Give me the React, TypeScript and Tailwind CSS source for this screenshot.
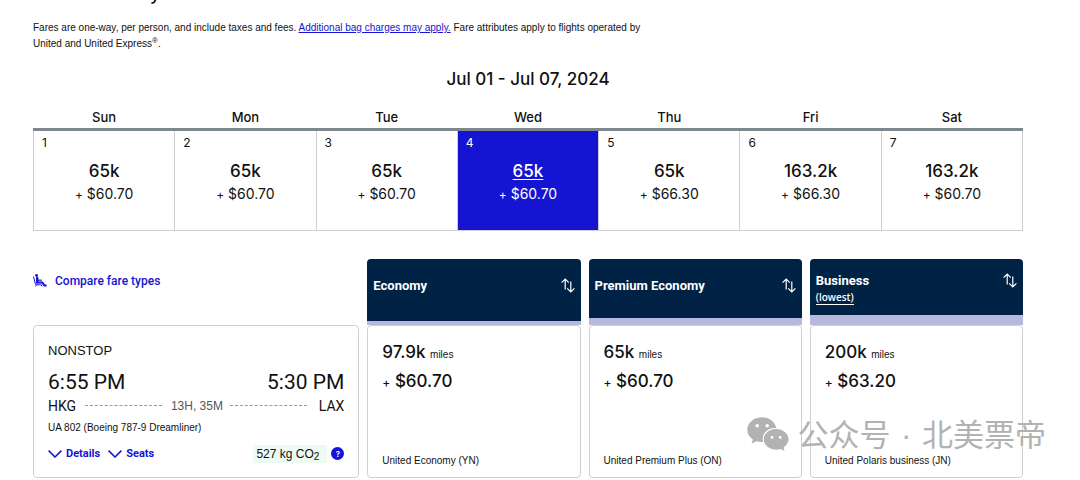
import clsx from "clsx";

type Day = { name: string; date: number; miles: string; tax: string; selected?: boolean };

type Fare = {
  title: string;
  lowest?: boolean;
  stripe: string;
  miles: string;
  tax: string;
  cabin: string;
};

const days: Day[] = [
  { name: "Sun", date: 1, miles: "65k", tax: "$60.70" },
  { name: "Mon", date: 2, miles: "65k", tax: "$60.70" },
  { name: "Tue", date: 3, miles: "65k", tax: "$60.70" },
  { name: "Wed", date: 4, miles: "65k", tax: "$60.70", selected: true },
  { name: "Thu", date: 5, miles: "65k", tax: "$66.30" },
  { name: "Fri", date: 6, miles: "163.2k", tax: "$66.30" },
  { name: "Sat", date: 7, miles: "163.2k", tax: "$60.70" },
];

const fares: Fare[] = [
  { title: "Economy", stripe: "border-b-4", miles: "97.9k", tax: "$60.70", cabin: "United Economy (YN)" },
  { title: "Premium Economy", stripe: "border-b-[7px]", miles: "65k", tax: "$60.70", cabin: "United Premium Plus (ON)" },
  { title: "Business", lowest: true, stripe: "border-b-[10px]", miles: "200k", tax: "$63.20", cabin: "United Polaris business (JN)" },
];

function SeatIcon() {
  return (
    <svg viewBox="0 0 14 13" className="h-[13px] w-[14px]" fill="none" stroke="currentColor" aria-hidden="true">
      <circle cx="3.6" cy="1.5" r="1.4" fill="currentColor" stroke="none" />
      <path d="M4.2 4v4.6" strokeWidth="2.4" strokeLinecap="round" />
      <path d="M4.4 8.6h5l1.900 2.800h2.300" strokeWidth="2" strokeLinejoin="round" />
      <path d="M4.600 6.200H8.800" strokeWidth="1.200" />
      <path d="M.5 2.600 2.400 10q.2.800 1 .8h4.800l.8 1.600M3.600 10.600l-1 1.800" strokeWidth="1" />
    </svg>
  );
}

function SortIcon() {
  return (
    <svg viewBox="0 0 14 15" className="h-[15px] w-[14px]" fill="none" stroke="currentColor" strokeWidth="1.2" aria-hidden="true">
      <path d="M4.2 11.5V1.2M.6 4.6 4.2 1l3.6 3.6" />
      <path d="M9.8 3.5v10.3M6.2 10.4l3.6 3.6 3.6-3.6" />
    </svg>
  );
}

function ChevronIcon() {
  return (
    <svg viewBox="0 0 14 8" className="h-2 w-[14px]" fill="none" stroke="currentColor" strokeWidth="1.5" aria-hidden="true">
      <path d="m.6.6 6.4 6.4L13.4.6" />
    </svg>
  );
}

function WeChatIcon() {
  return (
    <svg viewBox="0 0 42 34" className="h-[34px] w-[42px]" fill="currentColor" aria-hidden="true">
      <path
        fillRule="evenodd"
        d="M15.2.3C6.9.3.3 5.800.3 12.800c0 4 2.100 7.300 5.600 9.700l-1.400 4.300 5-2.500c1.800.4 3.400.7 5.400.7h1.300a10 10 0 0 1-.5-3c0-6.100 5.500-11 12.500-11h1.200C27.900 4.800 22 .3 15.200.3ZM10.200 7a1.800 1.800 0 1 1 0 3.600 1.800 1.800 0 0 1 0-3.600Zm10 0a1.800 1.800 0 1 1 0 3.600 1.800 1.800 0 0 1 0-3.600Z"
      />
      <path
        fillRule="evenodd"
        d="M41.5 22.3c0-5.7-5.7-10.3-12.3-10.3-7 0-12.4 4.6-12.4 10.3s5.400 10.400 12.400 10.400c1.500 0 3-.3 4.400-.7l4 2.100-1.100-3.500c2.900-2.100 5-5 5-8.300Zm-16.500-3.600a1.500 1.500 0 1 1 0 3 1.500 1.500 0 0 1 0-3Zm8.200 0a1.500 1.500 0 1 1 0 3 1.500 1.500 0 0 1 0-3Z"
      />
    </svg>
  );
}

function Calendar() {
  return (
    <table className="w-full table-fixed border-collapse">
      <thead>
        <tr className="border-b-[3px] border-[#7d888d]">
          {days.map((d) => (
            <th key={d.name} scope="col" className="h-[26px] pt-1 text-[13px] leading-5 font-medium">
              {d.name}
            </th>
          ))}
        </tr>
      </thead>
      <tbody>
        <tr>
          {days.map((d) => (
            <td
              key={d.date}
              className={clsx(
                "h-[101px] border border-[#cfcfcf] p-0 align-top",
                d.selected ? "bg-[#1414d2] text-white" : "bg-white",
              )}
            >
              <button type="button" className="block w-full pt-[2px] text-center">
                <span className="block pl-2 text-left text-[12px] leading-5">{d.date}</span>
                <span
                  className={clsx(
                    "mt-[6px] block text-[17px] leading-6 font-medium",
                    d.selected && "underline underline-offset-2",
                  )}
                >
                  {d.miles}
                </span>
                <span className="block text-[14px] leading-[22px]">
                  <span className="text-[12px]">+</span> {d.tax}
                </span>
              </button>
            </td>
          ))}
        </tr>
      </tbody>
    </table>
  );
}

function FlightCard() {
  return (
    <div className="flex h-[153px] flex-col rounded-[4px] border border-[#cfcfcf] px-[14px] pt-4">
      <p className="font-['Liberation_Sans'] text-[13px] leading-[18px]">NONSTOP</p>
      <div className="mt-2 flex justify-between font-['Roboto'] text-[21px] leading-7">
        <span>6:55 PM</span>
        <span>5:30 PM</span>
      </div>
      <div className="flex items-center font-['Roboto'] text-[14px] leading-5">
        <span>HKG</span>
        <span className="mx-[9px] flex-1 border-t border-dashed border-[#999]" />
        <span className="font-['Liberation_Sans'] text-[12px] text-[#555]">13H, 35M</span>
        <span className="mr-3 ml-[7px] flex-1 border-t border-dashed border-[#999]" />
        <span>LAX</span>
      </div>
      <p className="mt-[2px] font-['Liberation_Sans'] text-[10px] leading-5">UA 802 (Boeing 787-9 Dreamliner)</p>
      <div className="mt-[6px] flex items-center justify-between">
        <div className="flex gap-2 font-['Roboto'] text-[11px] leading-5 font-bold text-[#1414d2]">
          <button type="button" className="flex items-center gap-1">
            <ChevronIcon />
            Details
          </button>
          <button type="button" className="flex items-center gap-1">
            <ChevronIcon />
            Seats
          </button>
        </div>
        <div className="flex items-center gap-1">
          <span className="bg-[#eefbf3] pr-2 pl-[3px] font-['Liberation_Sans'] text-[12px] leading-[18px]">
            527 kg CO<sub className="text-[10px]">2</sub>
          </span>
          <button
            type="button"
            aria-label="About carbon emissions"
            className="flex size-[13px] items-center justify-center rounded-full bg-[#1414d2] text-[8px] font-semibold text-white"
          >
            ?
          </button>
        </div>
      </div>
    </div>
  );
}

function FareColumn({ fare }: { fare: Fare }) {
  return (
    <div>
      <div
        className={clsx(
          "h-[66px] rounded-t-[4px] border-[#b6b8dd] bg-[#002244] px-[6px] text-white",
          fare.stripe,
          fare.lowest ? "pt-3" : "pt-[17px]",
        )}
      >
        <div className="flex items-center justify-between">
          <span className="font-['Roboto'] text-[13px] leading-5 font-bold">{fare.title}</span>
          <button type="button" aria-label={`Sort by ${fare.title}`}>
            <SortIcon />
          </button>
        </div>
        {fare.lowest && (
          <a href="#lowest" className="block w-fit border-b border-white font-['Open_Sans'] text-[10px] leading-[13px] font-semibold">
            (lowest)
          </a>
        )}
      </div>
      <div className="flex h-[153px] flex-col rounded-[4px] border border-[#cfcfcf] px-[14px] pt-[15px] pb-2">
        <p className="text-[17px] leading-[22px] font-medium">
          {fare.miles} <span className="font-['Liberation_Sans'] text-[10px] font-normal">miles</span>
        </p>
        <p className="mt-1 text-[17px] leading-[22px] font-medium">
          <span className="text-[12px]">+</span> {fare.tax}
        </p>
        <p className="mt-auto font-['Liberation_Sans'] text-[10px] leading-4">{fare.cabin}</p>
      </div>
    </div>
  );
}

export default function App() {
  return (
    <main className="relative bg-white pr-[57px] pl-[33px] font-['Inter',sans-serif] text-[#111]">
      <div className="flex h-1 items-end overflow-hidden pl-[117px] text-[18px] leading-5 font-medium">y</div>

      <p className="mt-4 max-w-[620px] font-['Liberation_Sans'] text-[10px] leading-4">
        Fares are one-way, per person, and include taxes and fees.{" "}
        <a href="#bags" className="text-[#1414d2] underline">
          Additional bag charges may apply.
        </a>{" "}
        Fare attributes apply to flights operated by United and United Express
        <sup className="text-[8px]">®</sup>.
      </p>

      <h2 className="mt-[15px] text-center text-[17px] leading-6 font-medium">Jul 01 - Jul 07, 2024</h2>

      <div className="mt-3">
        <Calendar />
      </div>

      <div className="mt-7 grid grid-cols-[326fr_213fr_213fr_213fr] gap-2">
        <div>
          <div className="h-[66px] pt-3">
            <a href="#fares" className="flex w-fit items-center gap-2 font-['Roboto'] text-[12px] leading-5 font-medium text-[#1414d2]">
              <SeatIcon />
              Compare fare types
            </a>
          </div>
          <FlightCard />
        </div>
        {fares.map((fare) => (
          <FareColumn key={fare.title} fare={fare} />
        ))}
      </div>

      <div className="pointer-events-none absolute right-[34px] bottom-6 flex items-center gap-2 text-[#b2b2b2]">
        <WeChatIcon />
        <span className="font-['Noto_Sans_CJK_SC',sans-serif] text-[31px] leading-9 whitespace-nowrap">
          公众号<span className="px-[2px] font-['Liberation_Sans']"> · </span>北美票帝
        </span>
      </div>
    </main>
  );
}
